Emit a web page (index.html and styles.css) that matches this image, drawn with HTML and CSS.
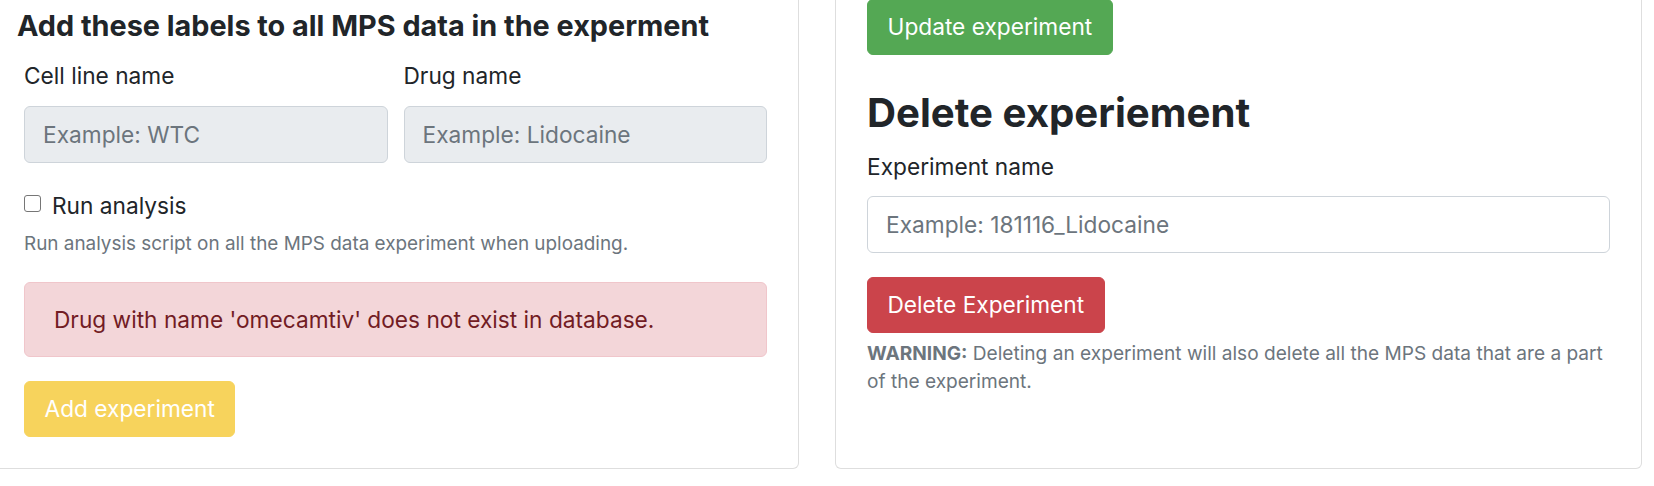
FILE: index.html
```html
<!DOCTYPE html>
<html lang="en">
<head>
<meta charset="utf-8">
<title>Experiments</title>
<link rel="stylesheet" href="styles.css">
</head>
<body>
<div class="row">
  <section class="card card-left">
    <h4 class="card-title">Add these labels to all MPS data in the experment</h4>
    <div class="field-grid">
      <div class="field">
        <label class="field-label" for="cell">Cell line name</label>
        <input class="input input-disabled" id="cell" type="text" placeholder="Example: WTC" disabled>
      </div>
      <div class="field">
        <label class="field-label" for="drug">Drug name</label>
        <input class="input input-disabled" id="drug" type="text" placeholder="Example: Lidocaine" disabled>
      </div>
    </div>
    <div class="check-row">
      <input class="check" id="run" type="checkbox">
      <label class="check-label" for="run">Run analysis</label>
    </div>
    <p class="help-text">Run analysis script on all the MPS data experiment when uploading.</p>
    <div class="alert">Drug with name 'omecamtiv' does not exist in database.</div>
    <button class="btn btn-warning" type="button">Add experiment</button>
  </section>

  <section class="card card-right">
    <button class="btn btn-success" type="button">Update experiment</button>
    <h2 class="section-title">Delete experiement</h2>
    <label class="field-label label-right" for="expname">Experiment name</label>
    <input class="input" id="expname" type="text" placeholder="Example: 181116_Lidocaine">
    <button class="btn btn-danger" type="button">Delete Experiment</button>
    <p class="warning-text"><strong>WARNING:</strong> Deleting an experiment will also delete all the MPS data that are a part of the experiment.</p>
  </section>
</div>
</body>
</html>
```
FILE: styles.css
```css
* { box-sizing: border-box; }

html, body {
  margin: 0;
  padding: 0;
  background: #ffffff;
  overflow: hidden;
}

body {
  font-family: Inter, "Liberation Sans", sans-serif;
  font-size: 22.7px;
  color: #212529;
}

.row {
  display: grid;
  grid-template-columns: 807px 807px;
  column-gap: 36px;
  margin: -20px 0 0 -8px;
}

.card {
  display: flex;
  flex-direction: column;
  align-items: flex-start;
  border: 1px solid rgba(0, 0, 0, 0.13);
  border-radius: 6px;
  background: #ffffff;
  padding: 28px 31px 31px 31px;
}

.card-right {
  padding-top: 18px;
}

.card-title {
  margin: 0 0 16px -7px;
  font-size: 28.8px;
  line-height: 34px;
  font-weight: 700;
  color: #212529;
  letter-spacing: 0;
}

.field-grid {
  display: grid;
  grid-template-columns: 1fr 1fr;
  column-gap: 16px;
  width: 100%;
}

.field {
  display: flex;
  flex-direction: column;
}

.field-label {
  display: block;
  font-size: 22.7px;
  line-height: 34px;
  margin: 0 0 13px 0;
  color: #212529;
}

.label-right {
  margin-top: 13px;
  margin-bottom: 12px;
}

.input {
  display: block;
  width: 100%;
  height: 57px;
  padding: 0 18px;
  font-family: Inter, "Liberation Sans", sans-serif;
  font-size: 22.7px;
  color: #495057;
  background: #ffffff;
  border: 1px solid #ced4da;
  border-radius: 6px;
  outline: none;
}

.input::placeholder {
  color: #6c757d;
  opacity: 1;
}

.input-disabled {
  background: #e9ecef;
}

.check-row {
  display: flex;
  align-items: flex-start;
  margin-top: 26px;
  height: 34px;
}

.check {
  appearance: none;
  -webkit-appearance: none;
  width: 17px;
  height: 17px;
  margin: 6px 0 0 0;
  border: 1px solid #767676;
  border-radius: 3px;
  background: #ffffff;
  flex: none;
}

.check-label {
  margin-left: 11px;
  font-size: 22.7px;
  line-height: 34px;
}

.help-text {
  margin: 7px 0 0 0;
  font-size: 18.9px;
  line-height: 28px;
  color: #6c757d;
}

.alert {
  width: 100%;
  margin-top: 24px;
  padding: 20px 29px;
  height: 75px;
  font-size: 22.7px;
  line-height: 33px;
  color: #721c24;
  background: #f3d6d9;
  border: 1px solid #f0c6cb;
  border-radius: 6px;
}

.btn {
  display: inline-block;
  height: 56px;
  padding: 10px 19.5px;
  font-family: Inter, "Liberation Sans", sans-serif;
  font-size: 22.7px;
  line-height: 34px;
  font-weight: 400;
  color: #ffffff;
  border: 1px solid transparent;
  border-radius: 6px;
  white-space: nowrap;
  cursor: pointer;
}

.btn-warning {
  margin-top: 24px;
  background: #f7d35c;
  border-color: #f7d35c;
}

.btn-success {
  background: #54a854;
  border-color: #54a854;
}

.btn-danger {
  margin-top: 24px;
  background: #cb444b;
  border-color: #cb444b;
}

.section-title {
  margin: 34px 0 0 0;
  font-size: 40.2px;
  line-height: 48px;
  font-weight: 700;
  color: #212529;
}

.warning-text {
  margin: 6px 0 0 0;
  font-size: 19.1px;
  line-height: 28.4px;
  color: #6c757d;
}

.warning-text strong {
  font-weight: 700;
}
```
